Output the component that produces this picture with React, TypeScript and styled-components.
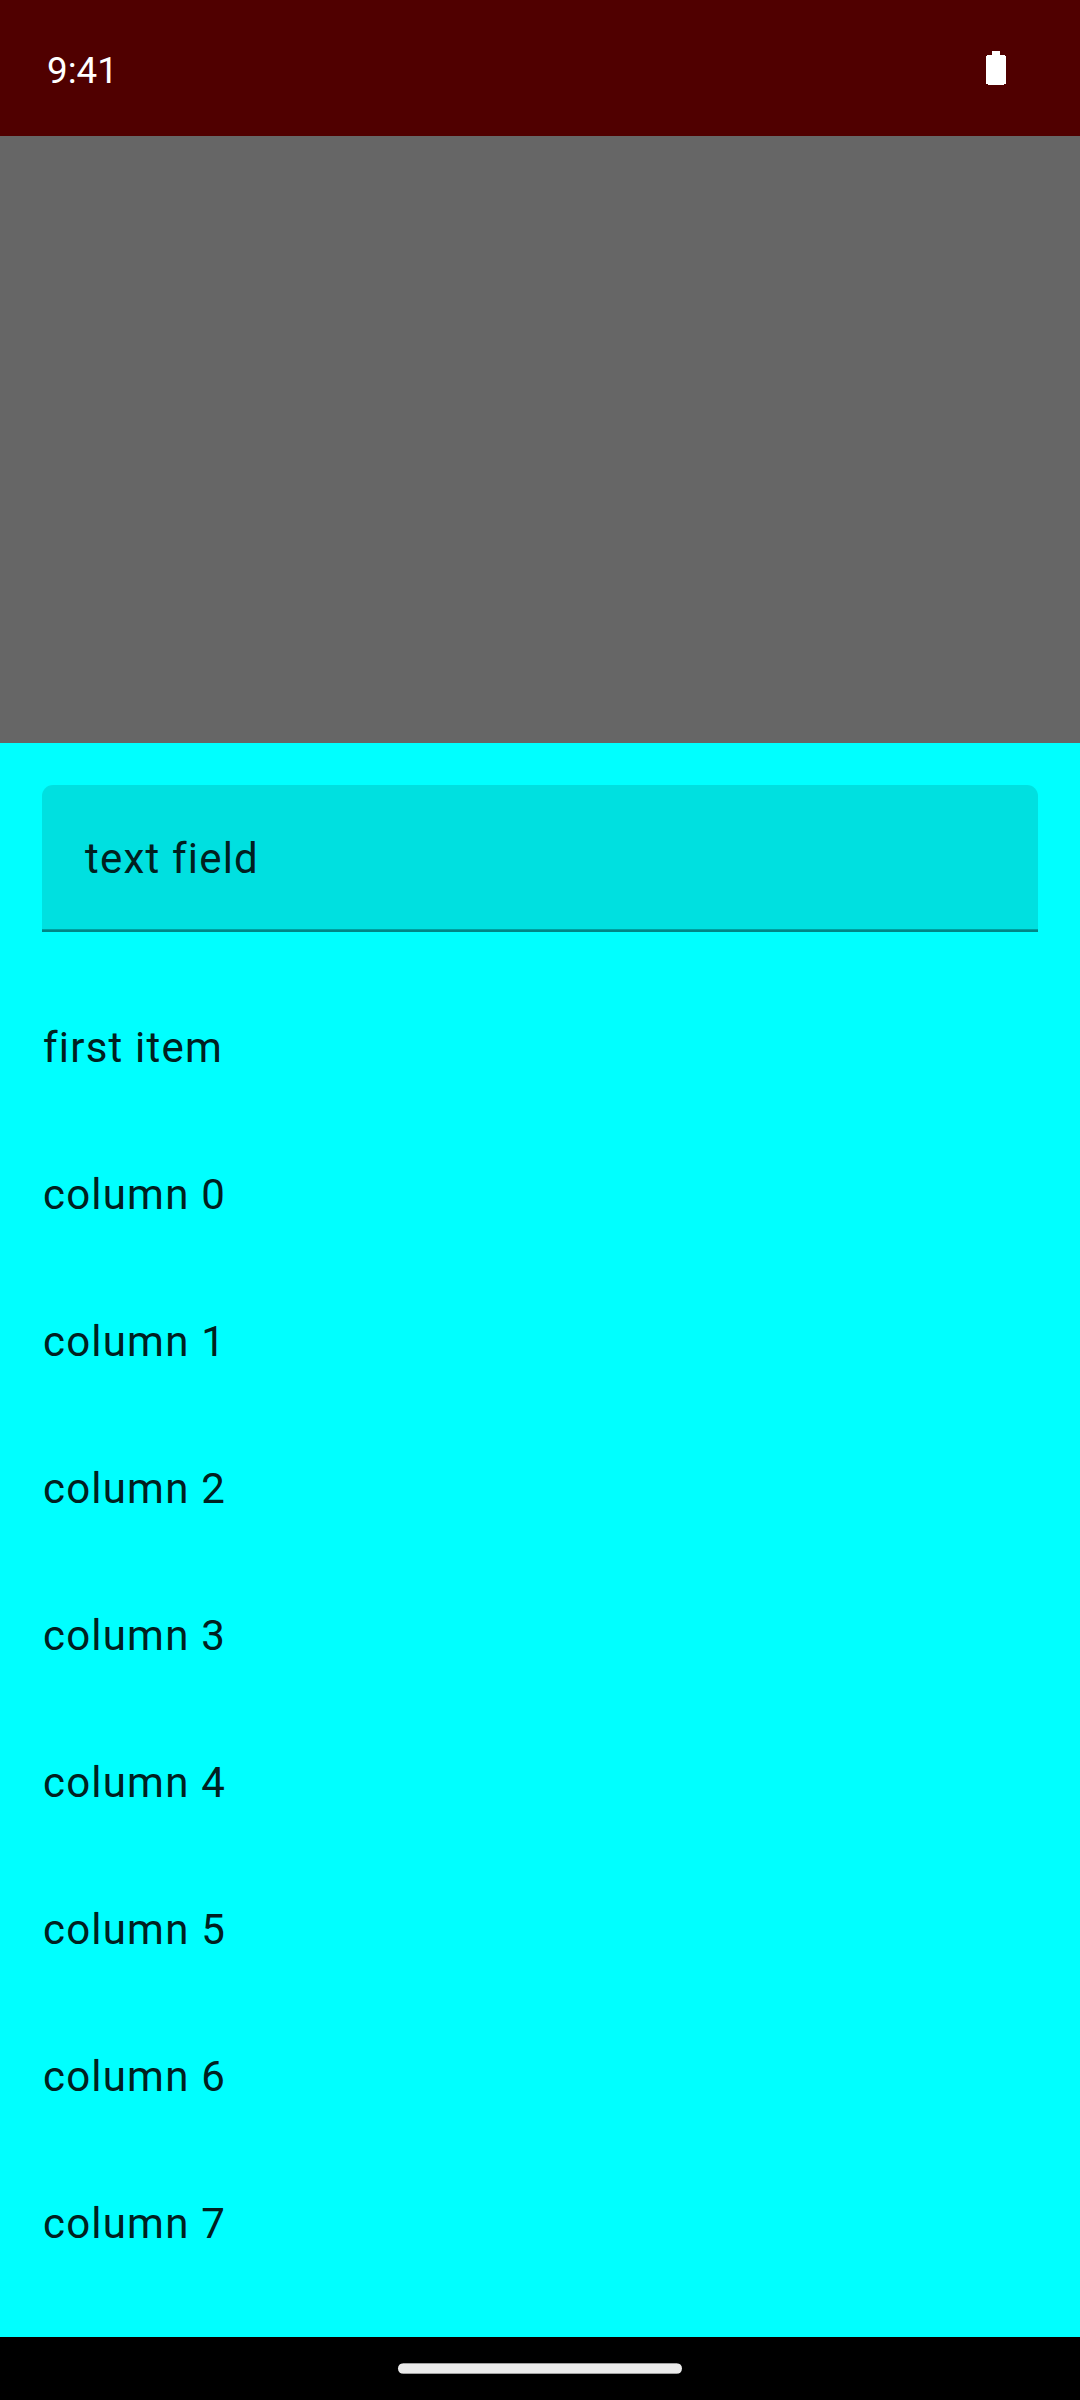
import React from "react";
import styled, { createGlobalStyle } from "styled-components";

const Global = createGlobalStyle`
  body { margin: 0; font-family: Roboto, "Noto Sans", sans-serif; }
  * { box-sizing: border-box; }
`;
const Screen = styled.main`
  width: 1080px; height: 2400px; display: flex; flex-direction: column;
  background: #666; overflow: hidden;
`;
const StatusBar = styled.header`
  height: 136px; flex: none; background: #500000; color: #fff;
  display: flex; align-items: flex-start; justify-content: space-between;
  padding: 0 74px 0 47px;
`;
const Clock = styled.span`margin-top: 49px; font-size: 36.75px; line-height: 44px;`;
const Battery = styled.svg`display: block; margin-top: 51px;`;
const Scrim = styled.div`height: 607px; flex: none;`;
const Sheet = styled.section`
  flex: 1; background: #0ff; padding: 42px 42px 0; display: flex; flex-direction: column;
`;
const Field = styled.div`
  height: 147px; flex: none; margin-bottom: 42px; padding: 0 42px; display: flex; align-items: center;
  background: linear-gradient(to top, #008686 2px, #00a0a0 2px 3px, #00e0e0 3px);
  border-radius: 11px 11px 0 0;
`;
const Label = styled.span`
  padding-left: 1px; font-size: 42px; line-height: 63px; letter-spacing: 1.2px; color: #002020;
`;
const Row = styled.div`height: 147px; flex: none; display: flex; align-items: center;`;
const NavBar = styled.footer`
  height: 63px; flex: none; background: #000; display: flex; align-items: center; justify-content: center;
`;
const Handle = styled.div`
  width: 284px; height: 11px; border-radius: 5.5px;
  background: linear-gradient(#a0a0a0 1px, #ebebeb 1px 10px, #a0a0a0 10px);
`;

const items = ["first item", ...Array.from({ length: 8 }, (_, i) => `column ${i}`)];

export default function App() {
  return (
    <Screen>
      <Global />
      <StatusBar>
        <Clock>9:41</Clock>
        <Battery width="20" height="34" viewBox="0 0 20 34" fill="#fff">
          <path d="M6 0h8v4h5v1h1v28h-2v1H2v-1H0V5h1V4h5z" />
        </Battery>
      </StatusBar>
      <Scrim />
      <Sheet>
        <Field><Label>text field</Label></Field>
        {items.map((t) => <Row key={t}><Label>{t}</Label></Row>)}
      </Sheet>
      <NavBar><Handle /></NavBar>
    </Screen>
  );
}
